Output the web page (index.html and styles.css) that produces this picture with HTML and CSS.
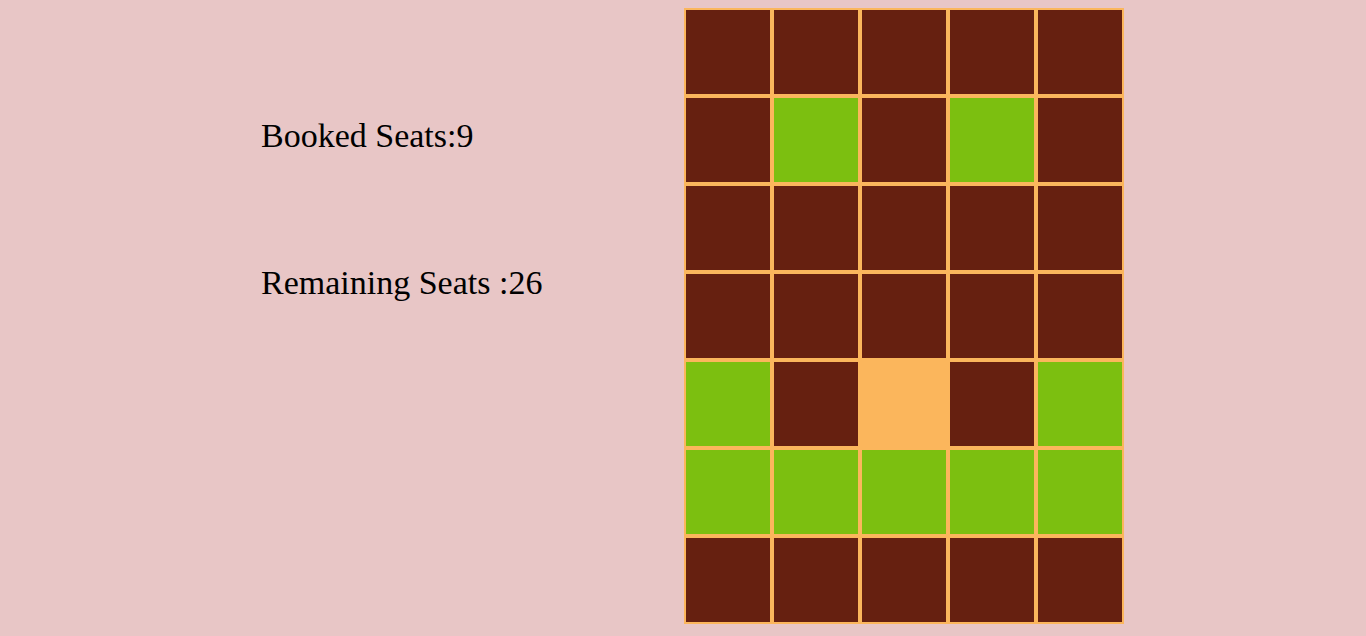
FILE: index.html
```html
<!DOCTYPE html>
<html lang="en">
<head>
  <meta charset="UTF-8" />
  <title>Seat Booking</title>
  <meta name="viewport" content="width=device-width, initial-scale=1" />
  <link rel="stylesheet" href="styles.css">
</head>
<body>
  <div class="page">
    <div class="info">
      <p class="count">Booked Seats:9</p>
      <p class="count remaining">Remaining Seats :26</p>
    </div>
    <div class="seats">
      <div class="seat"></div><div class="seat"></div><div class="seat"></div><div class="seat"></div><div class="seat"></div>
      <div class="seat"></div><div class="seat booked"></div><div class="seat"></div><div class="seat booked"></div><div class="seat"></div>
      <div class="seat"></div><div class="seat"></div><div class="seat"></div><div class="seat"></div><div class="seat"></div>
      <div class="seat"></div><div class="seat"></div><div class="seat"></div><div class="seat"></div><div class="seat"></div>
      <div class="seat booked"></div><div class="seat"></div><div class="seat selected"></div><div class="seat"></div><div class="seat booked"></div>
      <div class="seat booked"></div><div class="seat booked"></div><div class="seat booked"></div><div class="seat booked"></div><div class="seat booked"></div>
      <div class="seat"></div><div class="seat"></div><div class="seat"></div><div class="seat"></div><div class="seat"></div>
    </div>
  </div>
</body>
</html>
```
FILE: styles.css
```css
body {
  margin: 0;
  padding: 8px;
  background: #e8c6c6;
  font-family: 'Liberation Serif', serif;
}
.page {
  display: flex;
}
.info {
  width: 676px;
  box-sizing: border-box;
  padding-left: 253px;
  padding-top: 108px;
}
.count {
  margin: 0;
  font-size: 34px;
  line-height: 40px;
  color: #000;
}
.remaining {
  margin-top: 107px;
}
.seats {
  display: grid;
  grid-template-columns: repeat(5, 88px);
  grid-auto-rows: 88px;
}
.seat {
  box-sizing: border-box;
  border: 2px solid #fbb65c;
  background: #662010;
}
.seat.booked {
  background: #7cbf10;
}
.seat.selected {
  background: #fbb65c;
}
```
